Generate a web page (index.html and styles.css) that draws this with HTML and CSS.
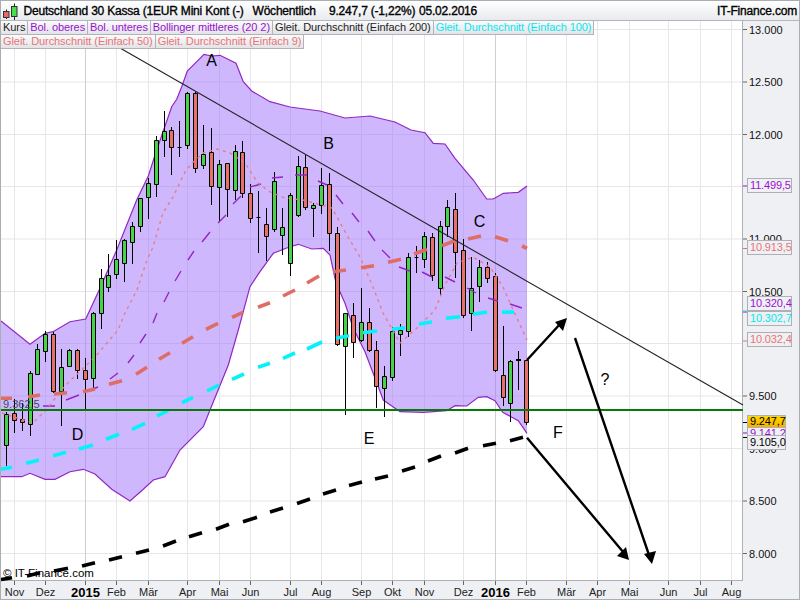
FILE: index.html
```html
<!DOCTYPE html>
<html lang="de">
<head>
<meta charset="utf-8">
<title>Deutschland 30 Kassa</title>
<link rel="stylesheet" href="styles.css">
</head>
<body>
<div class="window">
  <header class="title-bar">
    <svg class="logo" viewBox="0 0 16 18" width="16" height="18">
      <path class="logo-wick" d="M3.5 7.5V17M11.5 1.5V18"/>
      <rect class="logo-red" x="0.5" y="9.5" width="5.5" height="6"/>
      <rect class="logo-green" x="8.5" y="4.5" width="5.5" height="10"/>
    </svg>
    <span class="title-name">Deutschland 30 Kassa (1EUR Mini Kont (-)</span>
    <span class="title-period">Wöchentlich</span>
    <span class="title-quote">9.247,7 (-1,22%)</span>
    <span class="title-date">05.02.2016</span>
    <span class="title-site">IT-Finance.com</span>
  </header>
  <main class="chart">
    <svg class="plot" viewBox="1 21 798 578" width="798" height="578">
      <rect class="axis-bg" x="743" y="21" width="57" height="579"/>
      <rect class="axis-bg" x="1" y="581" width="742" height="19"/>
      <path class="grid" d="M1 29.5H743M1 82H743M1 134.5H743M1 186.5H743M1 239H743M1 291.5H743M1 343.5H743M1 396H743M1 448.5H743M1 501H743M1 553.5H743M14.5 21V580M45.5 21V580M116.5 21V580M148.5 21V580M187.5 21V580M219.5 21V580M250.5 21V580M290.5 21V580M321.5 21V580M361.5 21V580M392.5 21V580M424.5 21V580M463.5 21V580M526.5 21V580M566.5 21V580M597.5 21V580M629.5 21V580M668.5 21V580M700.5 21V580M731.5 21V580"/>
      <path class="grid-year" d="M85.5 21V580M495.5 21V580"/>
      <path class="axis-line" d="M1 580.5H743M742.5 21V581"/>
      <path class="axis-tick" d="M14.5 581v4M45.5 581v4M85.5 581v4M116.5 581v4M148.5 581v4M187.5 581v4M219.5 581v4M250.5 581v4M290.5 581v4M321.5 581v4M361.5 581v4M392.5 581v4M424.5 581v4M463.5 581v4M495.5 581v4M526.5 581v4M566.5 581v4M597.5 581v4M629.5 581v4M668.5 581v4M700.5 581v4M731.5 581v4M743 29.5h4M743 82h4M743 134.5h4M743 239h4M743 291.5h4M743 396h4M743 501h4M743 553.5h4"/>

      <path class="band" d="M1 321L30 344.3L45 333.3L53 331.7L70 321.7L85.7 319L100 288.3L116.7 250L136.7 200L148.3 176L156.7 150L171.7 106.7L176.7 99.3L181.7 86.7L187.3 71L204 54.3L211.7 56L220 55.3L236 63.3L243.3 81.7L251.7 91L270 101.7L290 107L320 111L345 118L370 116L395 122L411 130L425 132.7L433.3 143.3L445 144L455 158.3L473.3 180L486.7 199L493.3 199L503.3 193.3L518.3 192.3L527 186V433.3L518.3 420.7L502.7 412.3L495 400.7L486.7 396.7L478.3 397.3L466.7 406L455 405.7L446.7 410.7L423.3 412.3L400 411.7L395 408.3L383.3 400L365 351.7L353.3 328.3L345 303.3L336 283L330 255L323.3 248.3L311.7 249L298.3 244.3L290 246.7L273.3 253.3L260 271.7L250 286.7L238.3 330L228.3 365L210 410L203.3 426.7L180 450L165 476.7L153.3 480L143.3 489.3L130 501L111.7 489.3L95 474L83.3 469.3L70 471.7L55 479.3L45 479.3L30 473.3L21.7 476.7L1 476.7Z"/>
      <path class="band-line" d="M1 321L30 344.3L45 333.3L53 331.7L70 321.7L85.7 319L100 288.3L116.7 250L136.7 200L148.3 176L156.7 150L171.7 106.7L176.7 99.3L181.7 86.7L187.3 71L204 54.3L211.7 56L220 55.3L236 63.3L243.3 81.7L251.7 91L270 101.7L290 107L320 111L345 118L370 116L395 122L411 130L425 132.7L433.3 143.3L445 144L455 158.3L473.3 180L486.7 199L493.3 199L503.3 193.3L518.3 192.3L527 186M527 433.3L518.3 420.7L502.7 412.3L495 400.7L486.7 396.7L478.3 397.3L466.7 406L455 405.7L446.7 410.7L423.3 412.3L400 411.7L395 408.3L383.3 400L365 351.7L353.3 328.3L345 303.3L336 283L330 255L323.3 248.3L311.7 249L298.3 244.3L290 246.7L273.3 253.3L260 271.7L250 286.7L238.3 330L228.3 365L210 410L203.3 426.7L180 450L165 476.7L153.3 480L143.3 489.3L130 501L111.7 489.3L95 474L83.3 469.3L70 471.7L55 479.3L45 479.3L30 473.3L21.7 476.7L1 476.7"/>

      <path class="wick" d="M6.5 412V466M14.5 399V433M22.5 403V431M30.5 371V436M37.5 344V375M45.5 331V362M53.5 332V393M61.5 349V426M69.5 349V367M77.5 349V379M85.5 358V409M93.5 312V388M101.5 269V329M108.5 254V292M116.5 240V279M124.5 239V282M132.5 222V264M140.5 198V232M148.5 178V219M156.5 136V197M164.5 111V157M171.5 127V175M179.5 121V157M187.5 92V149M195.5 92V173M203.5 125V169M211.5 128V205M219.5 160V222M227.5 163V217M235.5 145V200M242.5 141V198M250.5 184V223M258.5 191V253M266.5 208V261M274.5 172V232M282.5 208V255M290.5 193V276M298.5 156V217M305.5 155V210M313.5 203V237M321.5 168V214M329.5 173V251M337.5 227V346M345.5 313V415M353.5 303V358M361.5 288V342M369.5 308V352M376.5 341V408M384.5 366V417M392.5 327V381M400.5 324V356M408.5 253V337M416.5 246V273M424.5 232V268M432.5 233V281M440.5 221V295M447.5 200V237M455.5 193V278M463.5 239V318M471.5 257V331M479.5 260V302M487.5 262V283M495.5 273V372M503.5 326V406M510.5 360V422M518.5 351V390M526.5 360V425M177.5 147.5h4M256.5 217.5h4M414.5 257.5h4"/>
      <path class="doji" d="M516 360H521"/>
      <path class="body-up" d="M4.5 414.5h4V445.5h-4zM28.5 373.5h4V424.5h-4zM35.5 349.5h4V374.5h-4zM43.5 334.5h4V351.5h-4zM59.5 367.5h4V391.5h-4zM67.5 350.5h4V366.5h-4zM91.5 313.5h4V378.5h-4zM99.5 278.5h4V313.5h-4zM106.5 275.5h4V287.5h-4zM114.5 259.5h4V274.5h-4zM122.5 240.5h4V263.5h-4zM130.5 226.5h4V242.5h-4zM138.5 198.5h4V226.5h-4zM146.5 183.5h4V197.5h-4zM154.5 140.5h4V184.5h-4zM162.5 131.5h4V140.5h-4zM185.5 93.5h4V145.5h-4zM201.5 154.5h4V165.5h-4zM217.5 164.5h4V187.5h-4zM233.5 151.5h4V190.5h-4zM272.5 181.5h4V229.5h-4zM280.5 227.5h4V235.5h-4zM288.5 195.5h4V263.5h-4zM296.5 166.5h4V215.5h-4zM311.5 205.5h4V208.5h-4zM319.5 185.5h4V205.5h-4zM343.5 313.5h4V346.5h-4zM359.5 322.5h4V340.5h-4zM382.5 376.5h4V388.5h-4zM390.5 331.5h4V377.5h-4zM398.5 330.5h4V334.5h-4zM406.5 257.5h4V331.5h-4zM422.5 236.5h4V259.5h-4zM438.5 226.5h4V288.5h-4zM445.5 207.5h4V226.5h-4zM469.5 288.5h4V313.5h-4zM477.5 267.5h4V286.5h-4zM508.5 361.5h4V403.5h-4z"/>
      <path class="body-down" d="M12.5 413.5h4V420.5h-4zM20.5 419.5h4V422.5h-4zM51.5 334.5h4V391.5h-4zM75.5 350.5h4V370.5h-4zM83.5 370.5h4V379.5h-4zM169.5 130.5h4V147.5h-4zM193.5 93.5h4V168.5h-4zM209.5 152.5h4V186.5h-4zM225.5 163.5h4V189.5h-4zM240.5 152.5h4V193.5h-4zM248.5 193.5h4V218.5h-4zM264.5 224.5h4V236.5h-4zM303.5 167.5h4V207.5h-4zM327.5 184.5h4V233.5h-4zM335.5 233.5h4V344.5h-4zM351.5 315.5h4V342.5h-4zM367.5 322.5h4V350.5h-4zM374.5 350.5h4V386.5h-4zM430.5 237.5h4V275.5h-4zM453.5 209.5h4V252.5h-4zM461.5 250.5h4V315.5h-4zM485.5 267.5h4V278.5h-4zM493.5 276.5h4V370.5h-4zM501.5 375.5h4V397.5h-4zM524.5 360.5h4V422.5h-4z"/>

      <path class="mid" d="M43 406H55M66 400L79 395M88 391L98 387M110 379L118 373M128 363L134 355M140 343L146 334M153 323L157 313M164 302L169 292M175 281L181 271M188 260L194 251M202 242L210 232M218 223L226 215M233 204L241 196M250 187L261 184M272 178L283 177M295 175L307 175M318 181L327 185M336 195L343 204M352 213L359 222M368 231L375 241M382 250L390 258M399 267L410 271M422 272L432 277M445 277L455 282M467 288L476 293M488 298L498 301M510 304L522 308"/>
      <path class="fast" d="M2 413L33 423L47 409L63 388L73 378L95 357L107 343L118 330L125 313L137 290L147 260L153 247L163 213L173 197L185 172L192 163L203 153L217 149L230 153L245 163L258 183L270 192L285 198L303 200L332 208L348 237L360 257L373 287L383 313L400 343L417 328L435 310L445 285L457 263L473 257L490 267L503 287L510 303L527 340"/>
      <path class="ma50" d="M1 398.3H12M28 397L40 395M54 394L67 392.7M83 391.7L95 389M109 384.3L122 380.7M136 374.3L147 367.3M159 359.3L170 352.7M182 343.3L193 336.7M206 329.3L218 323.3M232 317.3L243 312.3M258 307.3L270 302.7M283 296L295 290M307 283L319 276M333 271.7L346 270M361 267.7L374 265.7M388 262.3L401 259.3M414 254L427 249.3M442 245.7L454 241M468 239L481 236M495 236.7L508 240.7M522 246L527 248.3"/>
      <path class="ma100" d="M1 469.3L12 467.3M26 463.3L39 460M53 455.7L66 452.3M79 449L93 445M106 439.3L119 434.3M132 429.3L145 423.3M157 416L168 410.7M182 402.7L193 397.3M207 391L219 385M232 379.3L244 374M258 367.3L270 363.3M283 358.3L295 353M307 349L322 342M336 338.3L349 335.7M363 332.7L377 331M392 329.3L405 327.7M419 324L432 322M446 318.3L460 316.7M473 314.3L487 312M502 312.3L514 312"/>
      <path class="ma200" d="M1 579.6L12 577.7M27 576L40 572.7M54 571L68 568.3M82 566L95 562.7M109 560L122 556.7M136 553.3L149 550M163 546L176 541M189 536.7L202 532.7M216 529.3L229 524.3M243 521.7L257 517.3M270 512L283 508M297 503.5L310 499M323 494L336 490M349 485.5L362 482M375 479L388 476M402 471L415 467M428 461L441 456M455 453L468 448.3M483 445.7L496 443.3M510 440.7L523 437.3"/>

      <path class="trend" d="M120 48L743 405"/>
      <path class="support" d="M1 410H743"/>
      <path class="arrow" d="M527 360L561 323M527 437.7L624 553M575 338L649 555"/>
      <path class="arrow-head" d="M567 318L555 322L563 331ZM629 560L617 556L626 547ZM652 564L644 554L656 551Z"/>

      <text class="mark" x="211.5" y="66">A</text>
      <text class="mark" x="328.5" y="149">B</text>
      <text class="mark" x="479.5" y="227">C</text>
      <text class="mark" x="77.5" y="440">D</text>
      <text class="mark" x="369" y="444">E</text>
      <text class="mark" x="558" y="438">F</text>
      <text class="mark" x="605" y="385">?</text>
      <text class="last-mark" x="3" y="408">9.362,5</text>
      <text class="copyright" x="3" y="577">© IT-Finance.com</text>

      <g class="y-labels">
        <text x="749" y="33.5">13.000</text>
        <text x="749" y="86">12.500</text>
        <text x="749" y="138.5">12.000</text>
        <text x="749" y="243">11.000</text>
        <text x="749" y="295.5">10.500</text>
        <text x="749" y="400">9.500</text>
        <text x="749" y="452.5">9.000</text>
        <text x="749" y="505">8.500</text>
        <text x="749" y="557.5">8.000</text>
      </g>
      <g class="x-labels">
        <text x="14.5" y="596">Nov</text>
        <text x="45.5" y="596">Dez</text>
        <text class="year" x="85.5" y="597">2015</text>
        <text x="116.5" y="596">Feb</text>
        <text x="148.5" y="596">Mär</text>
        <text x="187.5" y="596">Apr</text>
        <text x="219.5" y="596">Mai</text>
        <text x="250.5" y="596">Jun</text>
        <text x="290.5" y="596">Jul</text>
        <text x="321.5" y="596">Aug</text>
        <text x="361.5" y="596">Sep</text>
        <text x="392.5" y="596">Okt</text>
        <text x="424.5" y="596">Nov</text>
        <text x="463.5" y="596">Dez</text>
        <text class="year" x="495.5" y="597">2016</text>
        <text x="526.5" y="596">Feb</text>
        <text x="566.5" y="596">Mär</text>
        <text x="597.5" y="596">Apr</text>
        <text x="629.5" y="596">Mai</text>
        <text x="668.5" y="596">Jun</text>
        <text x="700.5" y="596">Jul</text>
        <text x="731.5" y="596">Aug</text>
      </g>
      <path class="tick-purple" d="M743 186h4M743 312h4M743 433h4"/>
      <path class="tick-red" d="M743 248.5h4M743 341h4"/>
      <path class="tick-cyan" d="M743 311h4"/>
      <path class="tick-black" d="M743 422.5h4M743 437.5h4"/>
    </svg>

    <div class="legend">
      <div class="legend-row">
        <span class="chip c-black">Kurs</span>
        <span class="chip c-purple">Bol. oberes</span>
        <span class="chip c-purple">Bol. unteres</span>
        <span class="chip c-purple">Bollinger mittleres (20 2)</span>
        <span class="chip c-black">Gleit. Durchschnitt (Einfach 200)</span>
        <span class="chip c-cyan">Gleit. Durchschnitt (Einfach 100)</span>
      </div>
      <div class="legend-row">
        <span class="chip c-red">Gleit. Durchschnitt (Einfach 50)</span>
        <span class="chip c-red">Gleit. Durchschnitt (Einfach 9)</span>
      </div>
    </div>

    <div class="tag tag-a c-purple">11.499,5</div>
    <div class="tag tag-b c-red">10.913,5</div>
    <div class="tag tag-c c-purple">10.320,4</div>
    <div class="tag tag-d c-cyan">10.302,7</div>
    <div class="tag tag-e c-red">10.032,4</div>
    <div class="tag tag-g c-purple">9.141,2</div>
    <div class="tag tag-f">9.247,7</div>
    <div class="tag tag-h">9.105,0</div>
  </main>
</div>
</body>
</html>
```
FILE: styles.css
```css
* { box-sizing: border-box; }
html, body { margin: 0; padding: 0; background: #fff; }
body { font-family: "Liberation Sans", Arial, sans-serif; }

.window {
  width: 800px;
  height: 600px;
  border: 1px solid #a8aeb4;
  display: flex;
  flex-direction: column;
  overflow: hidden;
}

.title-bar {
  height: 20px;
  flex: none;
  display: flex;
  align-items: center;
  padding: 0 2px 0 2px;
  background: linear-gradient(#ffffff, #e8eaee);
  border-bottom: 1px solid #b4b8bc;
  font-size: 12px;
  font-weight: normal;
  -webkit-text-stroke: 0.35px #000;
  letter-spacing: -0.2px;
  color: #000;
  white-space: nowrap;
}
.logo { flex: none; margin: 0 4.5px 0 0; overflow: visible; }
.logo-wick { stroke: #222; stroke-width: 1; fill: none; }
.logo-red { fill: #e8686a; stroke: #333; stroke-width: 1; }
.logo-green { fill: #48e04a; stroke: #333; stroke-width: 1; }
.title-name { width: 229px; }
.title-period { width: 76.5px; }
.title-quote { width: 90px; }
.title-date { width: 60px; }
.title-site { margin-left: auto; }

.chart { position: relative; flex: 1; }
.plot { display: block; }

.axis-bg { fill: #eff0f4; }
.grid { stroke: #e6e6e8; stroke-width: 1; fill: none; }
.grid-year { stroke: #cfcfd2; stroke-width: 1; fill: none; }
.axis-line { stroke: #aeb0b3; stroke-width: 1; fill: none; }
.axis-tick { stroke: #666; stroke-width: 1; fill: none; }

.band { fill: rgba(160, 111, 251, 0.5); stroke: none; }
.band-line { fill: none; stroke: #9326c4; stroke-width: 1.2; }

.wick { stroke: #000; stroke-width: 1; fill: none; }
.doji { stroke: #000; stroke-width: 2; fill: none; }
.body-up { fill: #48d24c; stroke: #000; stroke-width: 1; }
.body-down { fill: #e8706a; stroke: #000; stroke-width: 1; }

.mid { stroke: #9326c4; stroke-width: 1.4; fill: none; }
.fast { stroke: #e67f80; stroke-width: 1.4; stroke-dasharray: 3 4; fill: none; }
.ma50 { stroke: #df6d66; stroke-width: 3.6; fill: none; }
.ma100 { stroke: #04f2fa; stroke-width: 3.6; fill: none; }
.ma200 { stroke: #000; stroke-width: 3.6; fill: none; }

.trend { stroke: #222; stroke-width: 1.1; fill: none; }
.support { stroke: #067a06; stroke-width: 2; fill: none; }
.arrow { stroke: #000; stroke-width: 2.4; fill: none; }
.arrow-head { fill: #000; stroke: none; }

.mark { font-size: 16px; text-anchor: middle; fill: #000; }
.last-mark { font-size: 11px; fill: #3e4a66; }
.copyright { font-size: 11.5px; fill: #000; }

.y-labels text { font-size: 11px; fill: #111; }
.x-labels text { font-size: 11px; fill: #222; text-anchor: middle; }
.x-labels .year { font-size: 13px; font-weight: bold; fill: #000; }

.tick-purple { stroke: #9010c8; fill: none; }
.tick-red { stroke: #e87070; fill: none; }
.tick-cyan { stroke: #00e8f0; fill: none; }
.tick-black { stroke: #000; fill: none; }

.legend { position: absolute; left: 0; top: 0; font-size: 11px; letter-spacing: -0.08px; line-height: 13px; }
.legend-row { display: flex; }
.chip {
  display: block;
  height: 14px;
  padding: 0 2px 0 2px;
  background: linear-gradient(#fbfbfc, #e2e4e8);
  border: 1px solid #b0b4b8;
  border-width: 0 1px 1px 0;
  white-space: nowrap;
  line-height: 13px;
}

.c-black { color: #222; }
.c-purple { color: #9a10d0; }
.c-cyan { color: #08e6ee; }
.c-red { color: #e87474; }

.tag {
  position: absolute;
  left: 746px;
  width: 45px;
  height: 15px;
  padding-left: 2px;
  border: 1px solid #aeb0b3;
  background: #eff0f4;
  font-size: 11px;
  letter-spacing: -0.15px;
  line-height: 13px;
  white-space: nowrap;
}
.tag-a { top: 157px; }
.tag-b { top: 219px; }
.tag-c { top: 275px; }
.tag-d { top: 290px; }
.tag-e { top: 311px; }
.tag-f { top: 394px; height: 13px; width: 39px; line-height: 11px; color: #000; background: linear-gradient(#ffd800, #f8b000); }
.tag-g { top: 405px; height: 13px; width: 39px; }
.tag-h { top: 414px; width: 39px; color: #000; }
```
